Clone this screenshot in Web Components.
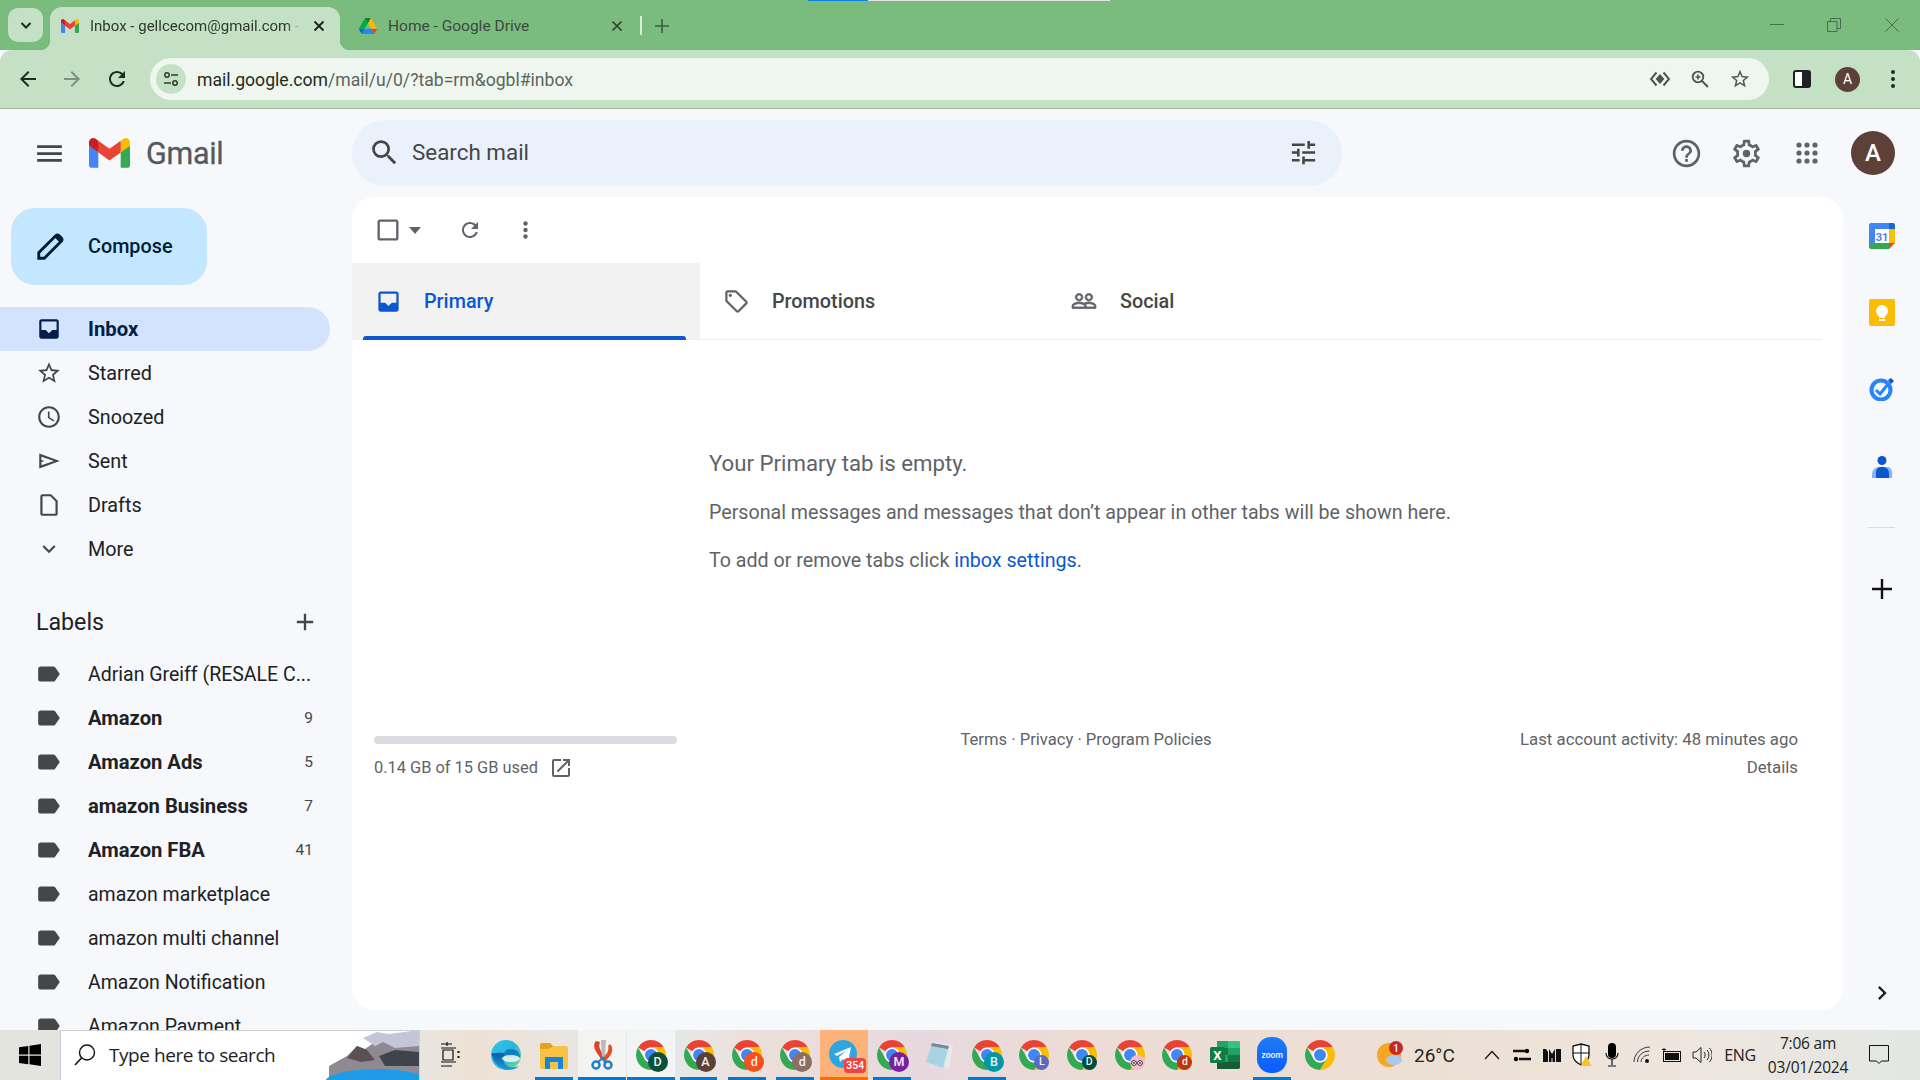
<!DOCTYPE html>
<html lang="en"><head><meta charset="utf-8"><title>Inbox - Gmail</title>
<style>
html,body{margin:0;padding:0;height:100%;overflow:hidden;background:#f6f8fc;font-family:Roboto,"Liberation Sans",sans-serif}
.root{display:flex;flex-direction:column;height:1080px;width:1920px;overflow:hidden}
gm-app{flex:1;min-height:0}
</style></head><body>
<div class="root">
<win-titlebar></win-titlebar>
<chrome-toolbar></chrome-toolbar>
<gm-app>
  <gm-brand slot="brand"></gm-brand>
  <gm-topbar slot="top"></gm-topbar>
  <gm-sidebar slot="side">
    <gm-compose></gm-compose>
    <gm-nav icon="inbox" active>Inbox</gm-nav>
    <gm-nav icon="star">Starred</gm-nav>
    <gm-nav icon="clock">Snoozed</gm-nav>
    <gm-nav icon="send">Sent</gm-nav>
    <gm-nav icon="draft">Drafts</gm-nav>
    <gm-nav icon="down">More</gm-nav>
    <gm-labels-head></gm-labels-head>
    <gm-nav icon="label">Adrian Greiff (RESALE C...</gm-nav>
    <gm-nav icon="label" bold count="9">Amazon</gm-nav>
    <gm-nav icon="label" bold count="5">Amazon Ads</gm-nav>
    <gm-nav icon="label" bold count="7">amazon Business</gm-nav>
    <gm-nav icon="label" bold count="41">Amazon FBA</gm-nav>
    <gm-nav icon="label">amazon marketplace</gm-nav>
    <gm-nav icon="label">amazon multi channel</gm-nav>
    <gm-nav icon="label">Amazon Notification</gm-nav>
    <gm-nav icon="label">Amazon Payment</gm-nav>
  </gm-sidebar>
  <gm-main slot="main"></gm-main>
  <gm-rail slot="rail"></gm-rail>
</gm-app>
<win-taskbar></win-taskbar>
</div>
<script>
const P={
menu:'M3 18h18v-2H3v2zm0-5h18v-2H3v2zm0-7v2h18V6H3z',
search:'M15.5 14h-.79l-.28-.27A6.471 6.471 0 0 0 16 9.5 6.5 6.5 0 1 0 9.5 16c1.61 0 3.09-.59 4.23-1.57l.27.28v.79l5 4.99L20.49 19l-4.99-5zm-6 0C7.01 14 5 11.99 5 9.5S7.01 5 9.5 5 14 7.01 14 9.5 11.99 14 9.5 14z',
tune:'M3 17v2h6v-2H3zM3 5v2h10V5H3zm10 16v-2h8v-2h-8v-2h-2v6h2zM7 9v2H3v2h4v2h2V9H7zm14 4v-2H11v2h10zm-6-4h2V7h4V5h-4V3h-2v6z',
help:'M11 18h2v-2h-2v2zm1-16C6.48 2 2 6.48 2 12s4.48 10 10 10 10-4.48 10-10S17.52 2 12 2zm0 18c-4.41 0-8-3.59-8-8s3.59-8 8-8 8 3.59 8 8-3.59 8-8 8zm0-14c-2.21 0-4 1.79-4 4h2c0-1.1.9-2 2-2s2 .9 2 2c0 2-3 1.75-3 5h2c0-2.25 3-2.5 3-5 0-2.21-1.79-4-4-4z',
gear:'M19.43 12.98c.04-.32.07-.64.07-.98 0-.34-.03-.66-.07-.98l2.11-1.65c.19-.15.24-.42.12-.64l-2-3.46c-.09-.16-.26-.25-.44-.25-.06 0-.12.01-.17.03l-2.49 1c-.52-.4-1.08-.73-1.69-.98l-.38-2.65C14.46 2.18 14.25 2 14 2h-4c-.25 0-.46.18-.49.42l-.38 2.65c-.61.25-1.17.59-1.69.98l-2.49-1c-.06-.02-.12-.03-.18-.03-.17 0-.34.09-.43.25l-2 3.46c-.13.22-.07.49.12.64l2.11 1.65c-.04.32-.07.65-.07.98 0 .33.03.66.07.98l-2.11 1.65c-.19.15-.24.42-.12.64l2 3.46c.09.16.26.25.44.25.06 0 .12-.01.17-.03l2.49-1c.52.4 1.08.73 1.69.98l.38 2.65c.03.24.24.42.49.42h4c.25 0 .46-.18.49-.42l.38-2.65c.61-.25 1.17-.59 1.69-.98l2.49 1c.06.02.12.03.18.03.17 0 .34-.09.43-.25l2-3.46c.12-.22.07-.49-.12-.64l-2.11-1.65zm-1.98-1.71c.04.31.05.52.05.73 0 .21-.02.43-.05.73l-.14 1.13.89.7 1.08.84-.7 1.21-1.27-.51-1.04-.42-.9.68c-.43.32-.84.56-1.25.73l-1.06.43-.16 1.13-.2 1.35h-1.4l-.19-1.35-.16-1.13-1.06-.43c-.43-.18-.83-.41-1.23-.71l-.91-.7-1.06.43-1.27.51-.7-1.21 1.08-.84.89-.7-.14-1.13c-.03-.31-.05-.54-.05-.74s.02-.43.05-.73l.14-1.13-.89-.7-1.08-.84.7-1.21 1.27.51 1.04.42.9-.68c.43-.32.84-.56 1.25-.73l1.06-.43.16-1.13.2-1.35h1.39l.19 1.35.16 1.13 1.06.43c.43.18.83.41 1.23.71l.91.7 1.06-.43 1.27-.51.7 1.21-1.07.85-.89.7.14 1.13zM12 9.3a2.7 2.7 0 1 0 0 5.4 2.7 2.7 0 0 0 0-5.4z',
refresh:'M17.65 6.35C16.2 4.9 14.21 4 12 4c-4.42 0-7.99 3.58-7.99 8s3.57 8 7.99 8c3.73 0 6.84-2.55 7.73-6h-2.08c-.82 2.33-3.04 4-5.65 4-3.31 0-6-2.69-6-6s2.69-6 6-6c1.66 0 3.14.69 4.22 1.78L13 11h7V4l-2.35 2.35z',
inbox:'M19 3H5c-1.1 0-2 .9-2 2v14c0 1.1.9 2 2 2h14c1.1 0 2-.9 2-2V5c0-1.1-.9-2-2-2zm0 10h-4l-3 3-3-3H5V5h14v8z',
star:'M22 9.24l-7.19-.62L12 2 9.19 8.63 2 9.24l5.46 4.73L5.82 21 12 17.27 18.18 21l-1.63-7.03L22 9.24zM12 15.4l-3.76 2.27 1-4.28-3.32-2.88 4.38-.38L12 6.1l1.71 4.04 4.38.38-3.32 2.88 1 4.28L12 15.4z',
clock:'M11.99 2C6.47 2 2 6.48 2 12s4.47 10 9.99 10C17.52 22 22 17.52 22 12S17.52 2 11.99 2zM12 20c-4.42 0-8-3.58-8-8s3.58-8 8-8 8 3.58 8 8-3.58 8-8 8zm.5-13H11v6l5.25 3.15.75-1.23-4.5-2.67z',
send:'M3 5L22 12L3 19L3 5zM5 8V11L8 12 5 13V16L16.5 12L5 8z',
draft:'M14 2H6c-1.1 0-2 .9-2 2v16c0 1.1.9 2 2 2h12c1.1 0 2-.9 2-2V8l-6-6zM6 20V4h7.2L18 8.8V20H6z',
down:'M7.41 8.59L12 13.17l4.59-4.58L18 10l-6 6-6-6z',
tag:'M21.41 11.58l-9-9C12.05 2.22 11.55 2 11 2H4c-1.1 0-2 .9-2 2v7c0 .55.22 1.05.59 1.42l9 9c.36.36.86.58 1.41.58s1.05-.22 1.41-.59l7-7c.37-.36.59-.86.59-1.41s-.23-1.06-.59-1.42zM13 20.01L4 11V4h7v-.01l9 9-7 7.02zM6.5 5A1.5 1.5 0 1 0 6.5 8 1.5 1.5 0 0 0 6.5 5z',
people:'M16.5 13c-1.2 0-3.07.34-4.5 1-1.43-.67-3.3-1-4.5-1C5.33 13 1 14.08 1 16.25V19h22v-2.75c0-2.17-4.33-3.25-6.5-3.25zm-4 4.5h-10v-1.25c0-.54 2.56-1.75 5-1.75s5 1.21 5 1.75v1.25zm9 0H14v-1.25c0-.46-.2-.86-.52-1.22.88-.3 1.96-.53 3.02-.53 2.44 0 5 1.21 5 1.75v1.25zM7.5 12c1.93 0 3.5-1.57 3.5-3.5S9.43 5 7.5 5 4 6.57 4 8.5 5.57 12 7.5 12zm0-5.5c1.1 0 2 .9 2 2s-.9 2-2 2-2-.9-2-2 .9-2 2-2zm9 5.5c1.93 0 3.5-1.57 3.5-3.5S18.43 5 16.5 5 13 6.57 13 8.5s1.57 3.5 3.5 3.5zm0-5.5c1.1 0 2 .9 2 2s-.9 2-2 2-2-.9-2-2 .9-2 2-2z',
open:'M19 19H5V5h7V3H5a2 2 0 0 0-2 2v14a2 2 0 0 0 2 2h14c1.1 0 2-.9 2-2v-7h-2v7zM14 3v2h3.59l-9.83 9.83 1.41 1.41L19 6.41V10h2V3h-7z',
right:'M10 6L8.59 7.41 13.17 12l-4.58 4.59L10 18l6-6z',
plus:'M19 13h-6v6h-2v-6H5v-2h6V5h2v6h6v2z',
back:'M20 11H7.83l5.59-5.59L12 4l-8 8 8 8 1.41-1.41L7.83 13H20v-2z',
fwd:'M12 4l-1.41 1.41L16.17 11H4v2h12.17l-5.58 5.59L12 20l8-8z'
};
const ic=(n,w,h,c='currentColor',x='')=>`<svg width="${w}" height="${h||w}" viewBox="0 0 24 24" preserveAspectRatio="none" style="flex:none;display:block;${x}"><path fill="${c}" d="${P[n]}"/></svg>`;
const GMAIL=`<path fill="#4285F4" d="M58.182 192.05V93.14L27.507 65.077 0 49.504v125.091c0 9.658 7.825 17.455 17.455 17.455h40.727Z"/><path fill="#34A853" d="M197.818 192.05h40.727c9.659 0 17.455-7.826 17.455-17.455V49.505l-31.156 17.837-27.026 25.798v98.91Z"/><path fill="#EA4335" d="m58.182 93.14-4.174-38.647 4.174-36.989L128 69.868l69.818-52.364 4.669 34.992-4.669 40.644L128 145.504z"/><path fill="#FBBC04" d="M197.818 17.504V93.14L256 49.504V26.231c0-21.585-24.64-33.89-41.89-20.945l-16.292 12.218Z"/><path fill="#C5221F" d="m0 49.504 26.759 20.07L58.182 93.14V17.504L41.89 5.286C24.61-7.66 0 4.646 0 26.23v23.273Z"/>`;
const gmail=(w,h)=>`<svg width="${w}" height="${h}" viewBox="0 0 256 193" preserveAspectRatio="none" style="flex:none;display:block">${GMAIL}</svg>`;
const CHROME=`<path fill="#EA4335" d="M24 4a20 20 0 0 1 17.32 10H24a10 10 0 0 0-8.66 5L6.68 14A20 20 0 0 1 24 4z"/><path fill="#FBBC04" d="M41.32 14A20 20 0 0 1 24 44l8.66-15A10 10 0 0 0 24 14z"/><path fill="#34A853" d="M6.68 14l8.66 15a10 10 0 0 0 17.32 0L24 44A20 20 0 0 1 6.68 14z"/><circle cx="24" cy="24" r="10" fill="#fff"/><circle cx="24" cy="24" r="8" fill="#4285f4"/>`;
function def(name,css,html){
  customElements.define(name,class extends HTMLElement{
    constructor(){super();this.attachShadow({mode:'open'});}
    connectedCallback(){
      const h=typeof html==='function'?html(this):html;
      this.shadowRoot.innerHTML=`<style>${css}</style>${h}`;
    }
  });
}
def('win-titlebar',`
:host{display:flex;align-items:flex-end;height:50px;background:#7abc7e;position:relative;flex:none;color:#3c4a3d;font:15px Roboto,sans-serif}
.strip{position:absolute;left:808px;top:0;width:302px;height:1px;background:#e3e3e3}
.strip i{display:block;width:60px;height:1px;background:#0a84e0}
.dd{width:35px;height:34px;margin:0 7px 8px 8px;border-radius:10px;background:#c5e1c5;display:flex;align-items:center;justify-content:center;color:#1f2a20;flex:none}
.tab{width:290px;height:43px;box-sizing:border-box;display:flex;align-items:center;padding:0 13px 6px 11px;position:relative;flex:none}
.on{background:#c5e1c5;border-radius:12px 12px 0 0;color:#2b3a2d}
.on::before,.on::after{content:"";position:absolute;bottom:0;width:10px;height:10px}
.on::before{left:-10px;background:radial-gradient(circle at 0 0,transparent 10px,#c5e1c5 10.5px)}
.on::after{right:-10px;background:radial-gradient(circle at 100% 0,transparent 10px,#c5e1c5 10.5px)}
.t{flex:1;margin-left:11px;white-space:nowrap;overflow:hidden;-webkit-mask-image:linear-gradient(90deg,#000 93%,transparent);mask-image:linear-gradient(90deg,#000 93%,transparent);font-size:15px}
.x{flex:none;width:16px;display:flex;justify-content:center;margin-left:10px}
.tab2{margin-left:19px;width:271px;padding-left:0;padding-right:5px}
.tab2 .t{-webkit-mask-image:none;mask-image:none;font-size:15.5px}
.sep{width:1.5px;height:19px;background:#dbeedb;margin:0 0 15px 10px;flex:none}
.add{margin:0 0 17px 13px;flex:none}
.sp{flex:1}
.wc{display:flex;align-items:center;align-self:flex-start;margin-top:18px;flex:none}
`,`<div class="strip"><i></i></div>
<div class="dd"><svg width="14" height="14" viewBox="0 0 14 14"><path d="M2.5 5l4.5 4.5L11.5 5" fill="none" stroke="currentColor" stroke-width="2"/></svg></div>
<div class="tab on">${gmail(18,14)}<span class="t">Inbox - gellcecom@gmail.com -</span><span class="x"><svg width="12" height="12" viewBox="0 0 12 12"><path d="M1.5 1.5l9 9M10.5 1.5l-9 9" stroke="#222" stroke-width="1.9"/></svg></span></div>
<div class="tab tab2"><svg width="18" height="16" viewBox="0 0 87.3 78" style="flex:none"><path d="m6.6 66.85 3.85 6.65c.8 1.4 1.95 2.5 3.3 3.3l13.75-23.8h-27.5c0 1.55.4 3.1 1.2 4.5z" fill="#0066da"/><path d="m43.65 25-13.75-23.8c-1.35.8-2.5 1.9-3.3 3.3l-25.4 44a9.06 9.06 0 0 0-1.2 4.5h27.5z" fill="#00ac47"/><path d="m73.55 76.8c1.35-.8 2.5-1.9 3.3-3.3l1.6-2.75 7.65-13.25c.8-1.4 1.2-2.95 1.2-4.5h-27.502l5.852 11.5z" fill="#ea4335"/><path d="m43.65 25 13.75-23.8c-1.35-.8-2.9-1.2-4.5-1.2h-18.5c-1.6 0-3.15.45-4.5 1.2z" fill="#00832d"/><path d="m59.8 53h-32.3l-13.75 23.8c1.35.8 2.9 1.2 4.5 1.2h50.8c1.6 0 3.15-.45 4.5-1.2z" fill="#2684fc"/><path d="m73.4 26.5-12.7-22c-.8-1.4-1.95-2.5-3.3-3.3l-13.75 23.8 16.15 28h27.45c0-1.55-.4-3.1-1.2-4.5z" fill="#ffba00"/></svg><span class="t">Home - Google Drive</span><span class="x"><svg width="12" height="12" viewBox="0 0 12 12"><path d="M1.5 1.5l9 9M10.5 1.5l-9 9" stroke="#2f3f31" stroke-width="1.7"/></svg></span></div>
<div class="sep"></div>
<svg class="add" width="14" height="14" viewBox="0 0 14 14"><path d="M7 0v14M0 7h14" stroke="#3f5a42" stroke-width="1.6"/></svg>
<div class="sp"></div>
<div class="wc">
<svg width="14" height="14" viewBox="0 0 14 14" style="margin-right:43px"><path d="M0 6.5h14" stroke="#4a6a4d"/></svg>
<svg width="14" height="14" viewBox="0 0 14 14" style="margin-right:44px"><path d="M.5 3.5h9.5v10H.5zM3.5 3.5V.5h10v10H10" fill="none" stroke="#4a6a4d"/></svg>
<svg width="14" height="14" viewBox="0 0 14 14" style="margin-right:21px"><path d="M.5.5l13 13M13.5.5l-13 13" stroke="#4a6a4d"/></svg>
</div>`);
def('chrome-toolbar',`
:host{display:flex;align-items:center;height:59px;box-sizing:border-box;background:#c5e1c5;border-bottom:1px solid #9fb89f;border-radius:12px 12px 0 0;flex:none}
.b{width:44px;display:flex;justify-content:center;flex:none}
.bar{width:1619px;height:42px;background:#eff6ef;border-radius:21px;display:flex;align-items:center;flex:none;box-sizing:border-box;padding-left:6px}
.site{width:30px;height:30px;border-radius:50%;background:#c5e1c5;display:flex;align-items:center;justify-content:center;flex:none}
.url{margin-left:11px;font:17.6px Roboto,sans-serif;color:#5b655c;white-space:nowrap;flex:1;padding-top:1px}
.url b{font-weight:400;color:#1f2a20}
.rt{display:flex;align-items:center;margin-right:18px}
.side{margin-left:24px;width:18px;height:18px;box-sizing:border-box;border:2px solid #1f2124;border-radius:3px;background:linear-gradient(90deg,#fff 50%,#1f2124 50%);flex:none}
.av{margin-left:24px;width:25px;height:25px;border-radius:50%;background:#5d4037;color:#fff;font:14px Roboto,sans-serif;display:flex;align-items:center;justify-content:center;flex:none}
.dots{margin-left:30px;flex:none}
`,`<div class="b" style="margin-left:6px">${ic('back',24,24,'#1f2a20')}</div>
<div class="b">${ic('fwd',24,24,'#7e8f80')}</div>
<div class="b" style="margin-left:1px">${ic('refresh',24,24,'#1f2a20')}</div>
<div class="bar" style="margin-left:11px"><div class="site"><svg width="16" height="16" viewBox="0 0 16 16"><circle cx="4" cy="4" r="2.2" fill="none" stroke="#2c3a2e" stroke-width="1.5"/><path d="M8 4h7M1 12h7" stroke="#2c3a2e" stroke-width="1.7"/><circle cx="12" cy="12" r="2.2" fill="none" stroke="#2c3a2e" stroke-width="1.5"/></svg></div>
<div class="url"><b>mail.google.com</b>/mail/u/0/?tab=rm&amp;ogbl#inbox</div>
<div class="rt">
<svg width="20" height="16" viewBox="0 0 20 16" style="margin-right:21px"><path d="M6.5 1.5L1 8l5.5 6.5M13.5 1.5L19 8l-5.5 6.5" fill="none" stroke="#4b544d" stroke-width="2"/><path d="M10 3l4.4 5-4.4 5-4.4-5z" fill="#4b544d"/></svg>
<svg width="18" height="18" viewBox="0 0 18 18" style="margin-right:20px"><circle cx="7" cy="7" r="5.3" fill="none" stroke="#4b544d" stroke-width="1.8"/><path d="M11 11l6 6" stroke="#4b544d" stroke-width="2"/><path d="M7 4.5v5M4.5 7h5" stroke="#4b544d" stroke-width="1.6"/></svg>
${ic('star',22,22,'#4b544d')}</div></div>
<div class="side"></div><div class="av">A</div>
<svg class="dots" width="6" height="20" viewBox="0 0 6 20"><circle cx="3" cy="3" r="2" fill="#1f2a20"/><circle cx="3" cy="10" r="2" fill="#1f2a20"/><circle cx="3" cy="17" r="2" fill="#1f2a20"/></svg>`);
def('gm-app',`
:host{display:grid;grid-template-columns:352px 1fr 77px;grid-template-rows:88px minmax(0,1fr);background:#f6f8fc;overflow:hidden;font-family:Roboto,sans-serif}
::slotted([slot=top]){grid-column:2/4}
`,`<slot name="brand"></slot><slot name="top"></slot><slot name="side"></slot><slot name="main"></slot><slot name="rail"></slot>`);
def('gm-brand',`
:host{display:flex;align-items:center;padding-left:33px;color:#5f6368}
.g{font:30.5px Roboto,sans-serif;color:#55595e;margin-left:16px;letter-spacing:-.3px;-webkit-text-stroke:.3px #55595e}
`,`${ic('menu',33,33,'#444746')}<span style="width:23px"></span>${gmail(41,30)}<span class="g">Gmail</span>`);
def('gm-topbar',`
:host{display:flex;align-items:center;padding-right:25px}
.s{width:990px;height:66px;border-radius:33px;background:#eaf1fb;display:flex;align-items:center;padding:0 23px 0 16px;box-sizing:border-box;margin-bottom:1px}
.s span{flex:1;margin-left:11px;font-size:22.4px;color:#444746;padding-bottom:1px}
.sp{flex:1}
.i{width:60px;display:flex;justify-content:center;position:relative;left:-1px}
.av{margin-left:14px;width:44px;height:44px;border-radius:50%;background:#5d4037;color:#fff;font:500 24px Roboto,sans-serif;display:flex;align-items:center;justify-content:center}
`,`<div class="s">${ic('search',33,33,'#444746')}<span>Search mail</span>${ic('tune',31,31,'#444746')}</div><div class="sp"></div>
<div class="i">${ic('help',33,33,'#5f6368')}</div><div class="i">${ic('gear',33,33,'#5f6368')}</div>
<div class="i" style="left:0"><svg width="22" height="22" viewBox="0 0 22 22" fill="#5f6368"><circle cx="3" cy="3" r="2.6"/><circle cx="11" cy="3" r="2.6"/><circle cx="19" cy="3" r="2.6"/><circle cx="3" cy="11" r="2.6"/><circle cx="11" cy="11" r="2.6"/><circle cx="19" cy="11" r="2.6"/><circle cx="3" cy="19" r="2.6"/><circle cx="11" cy="19" r="2.6"/><circle cx="19" cy="19" r="2.6"/></svg></div>
<div class="av">A</div>`);
def('gm-sidebar',`:host{display:block;overflow:hidden;min-height:0}`,`<slot></slot>`);
def('gm-compose',`
:host{display:flex;align-items:center;width:196px;height:77px;margin:11px 0 22px 11px;border-radius:24px;background:#c2e7ff;color:#001d35;font:500 19.8px Roboto,sans-serif;padding-left:21px;box-sizing:border-box}
span{margin-left:20px}
`,`<svg width="36" height="36" viewBox="0 0 24 24" style="flex:none;display:block"><path d="M4.5 19.5v-3.7L15.8 4.5a1.6 1.6 0 0 1 2.2 0l1.500 1.500a1.600 1.600 0 0 1 0 2.200L8.200 19.500z" fill="none" stroke="#001d35" stroke-width="1.900"/><path d="M15 5.500l3.500 3.500 1.500-1.500a1.500 1.500 0 0 0 0-2.100l-1.500-1.500a1.500 1.500 0 0 0-2.100 0z" fill="#001d35"/></svg><span>Compose</span>`);
def('gm-nav',`
:host{display:flex;align-items:center;height:44px;width:330px;box-sizing:border-box;padding-left:36px;font-size:19.8px;color:#202124;border-radius:0 22px 22px 0;white-space:nowrap}
:host([icon=label]){font-size:19.5px}
:host([active]){background:#d3e3fd;color:#041e49;font-weight:700;font-size:20.3px}
:host([bold]){font-weight:700;font-size:20.2px}
.t{margin-left:26px;flex:1;overflow:hidden}
.c{font-size:15.5px;font-weight:400;color:#444746;margin-right:17px}
`,h=>{
  const n=h.getAttribute('icon');const col=h.hasAttribute('active')?'#041e49':'#444746';
  const c=h.getAttribute('count');
  const svg=n==='label'?`<svg width="26" height="26" viewBox="0 0 24 24" preserveAspectRatio="none" style="flex:none;display:block;"><path fill="${col}" d="M17.63 5.84C17.27 5.33 16.67 5 16 5H4.5C3.1 5 2 5.9 2 7v10c0 1.1 1.100 2 2.500 2H16c.67 0 1.270-.33 1.630-.84L22 12l-4.370-6.160z"/></svg>`:ic(n,26,26,col);
  return `${svg}<span class="t"><slot></slot></span>${c?`<span class="c">${c}</span>`:''}`;
});
def('gm-labels-head',`
:host{display:flex;align-items:center;justify-content:space-between;height:44px;margin:29px 0 8px 0;padding:0 33px 0 36px;width:352px;box-sizing:border-box;font-size:23.2px;color:#202124}
`,`<span>Labels</span>${ic('plus',28,28,'#444746')}`);
def('gm-main',`
:host{display:flex;flex-direction:column;background:#fff;border-radius:22px;margin-bottom:20px;color:#5f6368;overflow:hidden;min-height:0}
.tb{height:66px;display:flex;align-items:center;flex:none;padding-left:22px}
.tabs{display:flex;height:77px;width:1470px;border-bottom:1px solid #eceff1;box-sizing:border-box;flex:none}
.tab{width:348px;display:flex;align-items:center;padding-left:20px;box-sizing:border-box;font:500 19.8px Roboto,sans-serif;color:#444746;position:relative}
.ib{width:32px;height:32px;display:flex;align-items:center;justify-content:center;flex:none}
.tab span{margin-left:20px}
.on{background:#f2f2f2;color:#0b57d0}
.on::after{content:"";position:absolute;left:11px;right:14px;bottom:-1px;height:4px;background:#0b57d0;border-radius:3px 3px 0 0}
.e{padding:108px 0 0 357px;font-size:19.65px;line-height:30px;color:#5f6368}
.e h2{font:400 22.2px/30px Roboto,sans-serif;margin:0;color:#5f6368}
.e p{margin:20px 0 0}
.e a{color:#0b57d0;text-decoration:none}
.f{display:grid;grid-template-columns:303px 1fr 303px;margin-top:153px;padding:0 45px 0 22px;font-size:16.6px;line-height:22px;color:#5f6368}
.bar{height:8px;border-radius:4px;background:#dadce0;margin-top:7px}
.u{margin-top:12px;display:flex;align-items:center;gap:11px;font-size:16.4px}
.m{text-align:center}
.r{text-align:right;font-size:16.8px;margin-top:-1px}
.r div+div{margin-top:6px}
`,`<div class="tb">
<svg width="28" height="28" viewBox="0 0 24 24" style="flex:none"><path fill="#5f6368" d="M19 5v14H5V5h14m0-2H5c-1.100 0-2 .9-2 2v14c0 1.100.9 2 2 2h14c1.100 0 2-.9 2-2V5c0-1.100-.9-2-2-2z"/></svg>
<svg width="12" height="7" viewBox="0 0 12 7" style="margin-left:7px"><path d="M0 0h12L6 7z" fill="#5f6368"/></svg>
${ic('refresh',24,24,'#5f6368','margin-left:37px')}
<svg width="5" height="18" viewBox="0 0 5 18" style="margin-left:41px"><circle cx="2.5" cy="2.5" r="2.2" fill="#5f6368"/><circle cx="2.5" cy="9" r="2.2" fill="#5f6368"/><circle cx="2.5" cy="15.5" r="2.2" fill="#5f6368"/></svg>
</div>
<div class="tabs">
<div class="tab on"><div class="ib">${ic('inbox',27,27,'#0b57d0')}</div><span>Primary</span></div>
<div class="tab"><div class="ib">${ic('tag',27,27,'#5f6368')}</div><span>Promotions</span></div>
<div class="tab"><div class="ib">${ic('people',26,26,'#5f6368','stroke:#5f6368;stroke-width:.7')}</div><span>Social</span></div>
</div>
<div class="e"><h2>Your Primary tab is empty.</h2>
<p>Personal messages and messages that don’t appear in other tabs will be shown here.</p>
<p style="margin-top:18px">To add or remove tabs click <a>inbox settings</a>.</p></div>
<div class="f">
<div><div class="bar"></div><div class="u"><span>0.14 GB of 15 GB used</span>${ic('open',24,24,'#5f6368')}</div></div>
<div class="m">Terms · Privacy · Program Policies</div>
<div class="r"><div>Last account activity: 48 minutes ago</div><div>Details</div></div>
</div>`);
def('gm-rail',`
:host{display:flex;flex-direction:column;align-items:center;min-height:0}
.hr{width:27px;height:1px;background:#dadce0;margin-top:49px;flex:none}
svg{flex:none;display:block}
`,`<svg style="margin-top:26px" width="26" height="26" viewBox="0 0 26 26"><path fill="#4285f4" d="M2 0h18v6H6v14H0V2a2 2 0 0 1 2-2z"/><path fill="#1967d2" d="M20 0h4a2 2 0 0 1 2 2v4h-6z"/><path fill="#fbbc04" d="M20 6h6v14h-6z"/><path fill="#34a853" d="M0 20h20v6H2a2 2 0 0 1-2-2z"/><path fill="#ea4335" d="M20 20h6l-6 6z"/><path fill="#fff" d="M6 6h14v14H6z"/><text x="13" y="17.5" font-family="Roboto,sans-serif" font-size="11" font-weight="700" text-anchor="middle" fill="#4285f4">31</text></svg>
<svg style="margin-top:50px" width="26" height="27" viewBox="0 0 26 27"><rect width="26" height="27" rx="2" fill="#fbbc04"/><circle cx="13" cy="12" r="6" fill="#fff"/><rect x="10" y="16" width="6" height="3" fill="#fff"/><rect x="10" y="20" width="6" height="2" fill="#fff"/></svg>
<svg style="margin-top:51px" width="26" height="24" viewBox="0 0 26 24"><circle cx="12" cy="13" r="9.5" fill="none" stroke="#2684fc" stroke-width="4"/><path d="M7 13l4 4 9-11" fill="none" stroke="#2684fc" stroke-width="3"/><path d="M19 3l3-2 3 3-3 3z" fill="#0b57d0"/></svg>
<svg style="margin-top:55px" width="20" height="22" viewBox="0 0 20 22"><circle cx="10" cy="4.5" r="4.5" fill="#0b57d0"/><path d="M0 22v-4a7 7 0 0 1 7-7h8a5 5 0 0 1 5 5v6z" fill="#8ab0f5"/><path d="M4 22v-6a5 5 0 0 1 5-5h2a6 6 0 0 1 6 6v5z" fill="#0b57d0"/></svg>
<div class="hr"></div>
<svg style="margin-top:51px" width="20" height="20" viewBox="0 0 20 20"><path d="M10 0v20M0 10h20" stroke="#111" stroke-width="2.4"/></svg>
<span style="flex:1"></span>
${ic('right',28,28,'#202124','margin-bottom:23px')}`);
/* taskbar */
def('tb-cell',`
:host{display:flex;align-items:center;justify-content:center;width:47.9px;height:50px;position:relative;flex:none;font-family:Roboto,sans-serif}
:host([hl]){background:rgba(255,255,255,.5)}
:host([tg]){background:#fdb27a}
:host([run])::after,:host([tg])::after,:host([hl])::after{content:"";position:absolute;bottom:0;left:5px;right:5px;height:3px;background:#0078d4}
:host([hl])::after{left:0;right:0}
:host([tg])::after{background:#f97000;left:0;right:0}
`,`<slot></slot>`);
def('tb-chrome',`
:host{display:block;width:30px;height:30px;position:relative;flex:none}
svg{display:block}
.b{position:absolute;border-radius:50%;display:flex;align-items:center;justify-content:center;color:#f2f2f2;font:500 12.5px Roboto,sans-serif;line-height:1}
.sm{font-size:10.5px}
`,h=>{
  const l=h.getAttribute('letter'),c=h.getAttribute('color');
  const small=h.hasAttribute('small');const z=small?15:20;const off=small?0:-2;
  const gl=h.hasAttribute('glasses')?`<svg width="12" height="6" viewBox="0 0 12 6"><circle cx="3" cy="3" r="2.4" fill="#fff" stroke="#333"/><circle cx="9" cy="3" r="2.4" fill="#fff" stroke="#333"/><circle cx="3" cy="3" r=".9" fill="#333"/><circle cx="9" cy="3" r=".9" fill="#333"/></svg>`:'';
  return `<svg width="30" height="30" viewBox="4 4 40 40">${CHROME}</svg>`+(c?`<span class="b ${small?'sm':''}" style="width:${z}px;height:${z}px;background:${c};right:${off}px;bottom:${off}px">${l||''}${gl}</span>`:'');
});
def('win-taskbar',`
:host{display:flex;height:50px;flex:none;background:linear-gradient(90deg,#e4e4de 0,#e8e6df 420px,#eee1d5 470px,#e4eaea 660px,#ecdfd9 760px,#e6d9df 920px,#ecdcd5 1080px,#ecdfd4 1400px,#eee6de 1700px,#e2e7e3 1920px);font-family:Roboto,sans-serif;color:#111;overflow:hidden}
.w{width:60px;display:flex;align-items:center;justify-content:center;flex:none}
.s{width:360px;height:50px;box-sizing:border-box;background:#fff;border:1px solid #cfcfcf;border-bottom:0;display:flex;align-items:center;padding:0 0 2px 12px;position:relative;overflow:hidden;flex:none;font:19px "Open Sans",Roboto,sans-serif;color:#222}
.s span{margin-left:12px;letter-spacing:-.45px}
.scene{position:absolute;right:0;bottom:0}
.tv{width:60px;display:flex;align-items:center;justify-content:center;flex:none;margin-right:2px}
.sp{flex:1}
.tray{width:550px;display:flex;align-items:center;flex:none;height:50px}
.wx{width:44px;display:flex;justify-content:center;position:relative;flex:none}
.temp{width:63px;box-sizing:border-box;font-size:19px;color:#222;flex:none}
.ti{width:30px;display:flex;justify-content:center;flex:none}
.eng{width:46px;text-align:center;font:16px "Open Sans",Roboto,sans-serif;color:#222;flex:none;letter-spacing:-.3px}
.clk{width:90px;text-align:center;font:15.5px/24px "Open Sans",Roboto,sans-serif;color:#222;flex:none;letter-spacing:-.2px}
.nt{width:52px;display:flex;justify-content:center;flex:none}
.tg{position:relative;width:30px;height:30px;flex:none}
.tg b{position:absolute;right:-7px;bottom:-3px;background:#ef4444;color:#fff;font:500 10.5px/15px Roboto,sans-serif;padding:0 2px;border-radius:4px}
.zm{width:30px;height:36px;border-radius:14px;background:linear-gradient(#1e7cf7,#0b5cff);color:#fff;font:500 8.5px Roboto,sans-serif;display:flex;align-items:center;justify-content:center;flex:none}
`,`<div class="w"><svg width="22" height="22" viewBox="0 0 22 22"><path d="M0 3.2L9.3 2v8.6H0zM10.5 1.8L22 0v10.6H10.5zM0 11.8h9.3v8.4L0 19zM10.5 11.8H22V22l-11.5-1.7z" fill="#000"/></svg></div>
<div class="s"><svg width="24" height="24" viewBox="0 0 24 24" style="flex:none"><circle cx="14" cy="9.5" r="7.5" fill="none" stroke="#111" stroke-width="1.4"/><path d="M8.5 15L2 22" stroke="#111" stroke-width="1.6"/></svg><span>Type here to search</span>
<svg class="scene" width="100" height="50" viewBox="0 0 100 50"><path d="M10 36l18-10 10-10 8 3 14-10 10-2 10-3 8-2 22 0v48H10z" fill="#8f8a92"/><path d="M44 8l14-6 12 2 30-4v16l-24 2-12-6-8 4z" fill="#c4c6d8"/><path d="M28 28l10-12 10 4 8 10-14 2z" fill="#5a5056"/><path d="M60 26l16-6 24 2v14H66z" fill="#3f434b"/><ellipse cx="58" cy="52" rx="52" ry="13" fill="#1e9ce8"/></svg></div>
<div class="tv"><svg width="20" height="26" viewBox="0 0 20 26" fill="none" stroke="#111" stroke-width="1.2"><path d="M1 2h11M7 0v4M1 24h11M3 8h10v10H3zM1 6h15M1 20h15"/><path d="M18.5 9v2M18.5 14v2" stroke-width="2"/></svg></div>
<tb-cell><svg width="32" height="32" viewBox="0 0 32 32"><defs><linearGradient id="e1" x1="0" y1="0" x2="1" y2="1"><stop offset="0" stop-color="#35c1f1"/><stop offset=".5" stop-color="#29b6d8"/><stop offset="1" stop-color="#7fe07f"/></linearGradient><linearGradient id="e2" x1="0" y1="0" x2="0" y2="1"><stop offset="0" stop-color="#0c59a4"/><stop offset="1" stop-color="#1b9de2"/></linearGradient></defs><circle cx="16" cy="16" r="15" fill="url(#e1)"/><path d="M1.5 14C3 24 11 31 18 31c4 0 8-1 11-4-4 2-10 2-13-1-3-3-3-8 1-11-7-3-13 0-15.500 -1z" fill="url(#e2)"/><path d="M30 19c0-6-4-9-9-9-4 0-7 2-7 6 0 2 2 3 5 3z" fill="#0f7ec6"/><ellipse cx="21" cy="19.500" rx="9" ry="3.500" fill="#e8f6f4" opacity=".9"/></svg></tb-cell>
<tb-cell run><svg width="28" height="27" viewBox="0 0 28 27"><path d="M0 3a2 2 0 0 1 2-2h8l3 3h13a2 2 0 0 1 2 2v19a2 2 0 0 1-2 2H2a2 2 0 0 1-2-2z" fill="#f6c343"/><path d="M0 3a2 2 0 0 1 2-2h8l3 3-4 3H0z" fill="#e9a21f"/><path d="M5 15h18v12h-5v-7h-8v7H5z" fill="#1487d8"/></svg></tb-cell>
<tb-cell hl><svg width="26" height="34" viewBox="0 0 26 34"><path d="M7 3c-3 3-2 8 1 12l4 6 2-4-3-6c-1-2-1-5 0-7z" fill="#e2402a"/><path d="M21 6c3 3 3 8 0 12l-6 7-2-4 5-6c1-2 2-5 1-7z" fill="#e2512a"/><path d="M12 2l5 0-1 16-3 2z" fill="#b9b9bb"/><circle cx="7" cy="27" r="3.500" fill="none" stroke="#1d7fd1" stroke-width="2.500"/><circle cx="19" cy="27" r="3.500" fill="none" stroke="#1d7fd1" stroke-width="2.500"/><path d="M9 24l6-5M17 24l-5-5" stroke="#1d7fd1" stroke-width="2"/></svg></tb-cell>
<tb-cell hl style="margin-left:1px"><tb-chrome letter="D" color="#0b4f3d"></tb-chrome></tb-cell>
<tb-cell run><tb-chrome letter="A" color="#5d4037"></tb-chrome></tb-cell>
<tb-cell run style="margin-left:1px"><tb-chrome letter="d" color="#f4511e"></tb-chrome></tb-cell>
<tb-cell run><tb-chrome letter="d" color="#8d6e63"></tb-chrome></tb-cell>
<tb-cell tg style="margin-left:1px"><span class="tg"><svg width="30" height="30" viewBox="0 0 30 30"><circle cx="14" cy="14" r="14" fill="#2ca5e0"/><path d="M5 14l17-7-3 16-5-4-3 3-1-5 7-6-9 5z" fill="#fff"/></svg><b>354</b></span></tb-cell>
<tb-cell run><tb-chrome letter="M" color="#7b1fa2"></tb-chrome></tb-cell>
<tb-cell><svg width="30" height="30" viewBox="0 0 30 30"><path d="M8 2l20 3-4 24-3-1z" fill="#e6ebea"/><path d="M7 3l17 3-6 22L1 22z" fill="#a7d3e2"/><path d="M7 3l17 3-1 3L6 6z" fill="#7c8a92"/></svg></tb-cell>
<tb-cell run style="margin-left:-1px"><tb-chrome letter="B" color="#0097a7"></tb-chrome></tb-cell>
<tb-cell style="margin-left:-.5px"><tb-chrome letter="L" color="#5c6bc0" small></tb-chrome></tb-cell>
<tb-cell style="margin-left:-.5px"><tb-chrome letter="D" color="#004d40" small></tb-chrome></tb-cell>
<tb-cell><tb-chrome glasses color="#f8bbd0" small></tb-chrome></tb-cell>
<tb-cell><tb-chrome letter="d" color="#bf360c" small></tb-chrome></tb-cell>
<tb-cell style="margin-left:-.5px"><svg width="30" height="28" viewBox="0 0 30 28"><path d="M7 0h21a2 2 0 0 1 2 2v24a2 2 0 0 1-2 2H7z" fill="#21a366"/><path d="M18 0h10a2 2 0 0 1 2 2v5H18z" fill="#33c481"/><path d="M18 14h12v7H18z" fill="#107c41"/><path d="M7 21h23v5a2 2 0 0 1-2 2H7z" fill="#185c37"/><path d="M7 7h11v7H7z" fill="#107c41"/><rect y="6" width="15" height="16" rx="1.500" fill="#107c41"/><text x="7.500" y="18.500" font-family="Roboto,sans-serif" font-weight="700" font-size="13" text-anchor="middle" fill="#fff">X</text></svg></tb-cell>
<tb-cell run style="margin-left:-.5px"><span class="zm">zoom</span></tb-cell>
<tb-cell><tb-chrome></tb-chrome></tb-cell>
<div class="sp"></div>
<div class="tray">
<div class="wx"><svg width="30" height="30" viewBox="0 0 30 30"><circle cx="12" cy="15" r="12" fill="#f5a623"/><ellipse cx="17" cy="20" rx="8" ry="5" fill="#a9c8ee"/><circle cx="19" cy="8" r="7" fill="#c62828"/><text x="19" y="11.500" font-family="Roboto,sans-serif" font-size="10" font-weight="500" text-anchor="middle" fill="#fff">1</text></svg></div>
<div class="temp">26°C</div>
<div class="ti"><svg width="16" height="10" viewBox="0 0 16 10"><path d="M1 9l7-7.500L15 9" fill="none" stroke="#111" stroke-width="1.200"/></svg></div>
<div class="ti"><svg width="18" height="16" viewBox="0 0 18 16"><path d="M0 4h12M6 12h12" stroke="#111" stroke-width="2.600"/><circle cx="14" cy="4" r="2.200"/><circle cx="3" cy="12" r="2.200"/></svg></div>
<div class="ti"><svg width="18" height="14" viewBox="0 0 18 14"><path d="M0 1h3l2 3v10H0zM6 1l3 5 3-5v13H9.500V10H8.500v4H6zM13 1h2l3 0v13h-5z" fill="#111"/></svg></div>
<div class="ti"><svg width="20" height="24" viewBox="0 0 20 24"><path d="M9 1l8 2v9c0 5-4 8-8 10-4-2-8-5-8-10V3z" fill="#fff" stroke="#111" stroke-width="1.300"/><path d="M9 1v21M1 10h16" stroke="#111"/><path d="M14 13l5.500 10h-11z" fill="#f7c325"/></svg></div>
<div class="ti"><svg width="14" height="24" viewBox="0 0 14 24"><rect x="3" width="8" height="15" rx="4"/><path d="M1 10c0 8 12 8 12 0M7 16v6M3 23h8" fill="none" stroke="#111" stroke-width="1.200"/></svg></div>
<div class="ti"><svg width="18" height="18" viewBox="0 0 18 18" fill="none" stroke="#333"><path d="M1 16C1 8 8 1 17 1M4.500 16c0-6 5-11 12-11M8 16c0-4 4-7 8-7"/><circle cx="14" cy="15" r="2" fill="#111" stroke="none"/></svg></div>
<div class="ti"><svg width="20" height="14" viewBox="0 0 20 14"><path d="M0 1.500h4M2 0v3" stroke="#111"/><rect x="1.500" y="3.500" width="17" height="10" fill="none" stroke="#111"/><rect x="3" y="5" width="14" height="7" fill="#111"/></svg></div>
<div class="ti"><svg width="20" height="18" viewBox="0 0 20 18" fill="none" stroke="#222"><path d="M1 6h3l5-4.500v15L4 12H1z"/><path d="M12 6c1.500 2 1.500 4 0 6M15 4c2.500 3 2.500 7 0 10M17.500 2c3.500 4 3.500 10 0 14"/></svg></div>
<div class="eng">ENG</div>
<div class="clk">7:06 am<br>03/01/2024</div>
<div class="nt"><svg width="20" height="20" viewBox="0 0 20 20"><path d="M.5.5h19v15.500h-7L10 18.500 7.500 16h-7z" fill="none" stroke="#111"/></svg></div>
</div>`);
</script>
</body></html>
